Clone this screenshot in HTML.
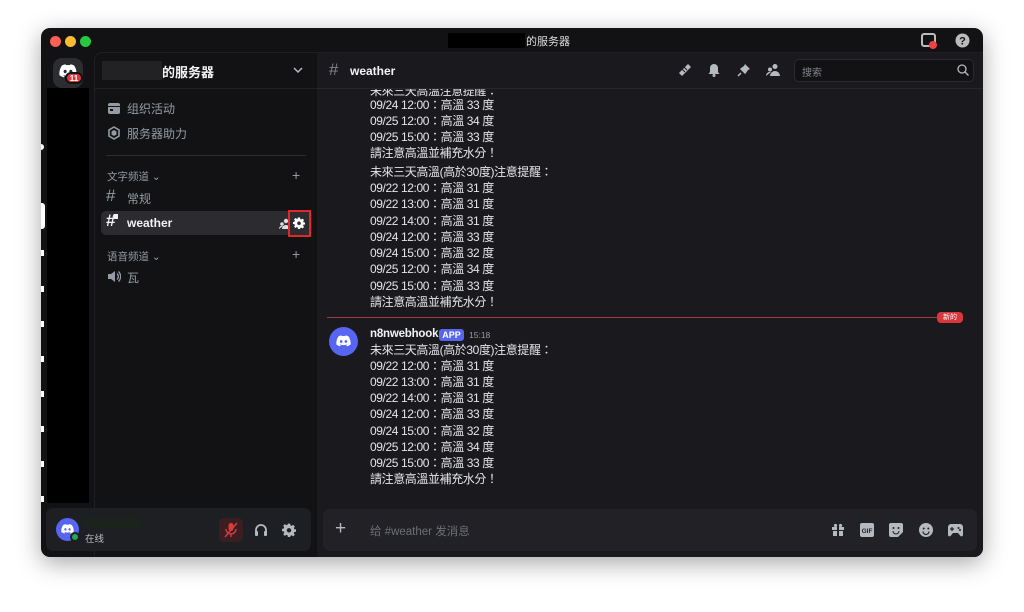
<!DOCTYPE html>
<html><head><meta charset="utf-8"><style>
*{margin:0;padding:0;box-sizing:border-box}
body{width:1024px;height:612px;background:#fff;position:relative;overflow:hidden;font-family:"Liberation Sans","Noto Sans CJK SC",sans-serif;color:#dbdee1}
.win{position:absolute;left:41px;top:28px;width:942px;height:529px;background:#121214;border-radius:9px;box-shadow:0 6px 24px rgba(0,0,0,.35);overflow:hidden}
.abs{position:absolute}
.dot{position:absolute;top:8px;width:11px;height:11px;border-radius:50%}
.msg{position:absolute;left:329px;font-size:12px;line-height:16px;color:#e4e5e8;white-space:nowrap;letter-spacing:-0.4px;font-family:"Liberation Sans","Noto Sans CJK TC",sans-serif}
.ic{position:absolute;color:#b5bac1}
</style></head><body>
<div class="win">
  <div class="dot" style="left:9px;background:#fe5f57"></div>
  <div class="dot" style="left:24px;background:#febc2e"></div>
  <div class="dot" style="left:39px;background:#28c840"></div>
  <div class="abs" style="left:407px;top:5px;width:77px;height:15px;background:#000"></div>
  <div class="abs" style="left:485px;top:5px;font-size:11px;color:#ddd">的服务器</div>
  <svg class="abs" style="left:880px;top:5px" width="16" height="16"><rect x="1" y="1" width="13" height="12" rx="2" fill="none" stroke="#bbb" stroke-width="2"/><circle cx="12" cy="12" r="4" fill="#f23f43"/></svg>
  <svg class="abs" style="left:914px;top:5px" width="15" height="15"><circle cx="7.5" cy="7.5" r="7" fill="#bbb"/><text x="7.5" y="11.5" font-size="11" font-weight="bold" text-anchor="middle" fill="#121214" font-family="Liberation Sans">?</text></svg>

  <!-- server rail -->
  <div class="abs" style="left:12px;top:30px;width:30px;height:30px;border-radius:9px;background:#2b2d31"></div>
  <svg class="abs" style="left:18px;top:36px" width="18" height="14" viewBox="0 0 24 18"><path d="M20 1.5A19 19 0 0 0 15.3 0l-.6 1.2a17 17 0 0 0-5.4 0L8.7 0A19 19 0 0 0 4 1.5C1 6 .2 10.3.6 14.6A19 19 0 0 0 6.4 17.5l1.2-1.9a12 12 0 0 1-1.9-.9l.5-.4a13.6 13.6 0 0 0 11.6 0l.5.4a12 12 0 0 1-1.9.9l1.2 1.9a19 19 0 0 0 5.8-2.9C23.8 9.6 22.6 5.3 20 1.5zM8.2 12c-1.1 0-2.1-1-2.1-2.3S7 7.4 8.2 7.4s2.1 1 2.1 2.3-1 2.3-2.1 2.3zm7.6 0c-1.1 0-2.1-1-2.1-2.3s.9-2.3 2.1-2.3 2.1 1 2.1 2.3-.9 2.3-2.1 2.3z" fill="#fff"/></svg>
  <div class="abs" style="left:24px;top:44px;width:18px;height:12px;border-radius:6px;background:#da373c;border:2px solid #121214;font-size:8px;font-weight:bold;color:#fff;text-align:center;line-height:9px">11</div>
  <div class="abs" style="left:6px;top:60px;width:42px;height:415px;background:#000"></div>
  <div class="abs" style="left:0;top:175px;width:4px;height:26px;background:#fff;border-radius:0 3px 3px 0"></div>
  <div class="abs" style="left:0;top:116px;width:3px;height:6px;background:#fff;border-radius:0 3px 3px 0"></div>
  <div class="abs" style="left:0;top:222px;width:3px;height:6px;background:#fff"></div>
  <div class="abs" style="left:0;top:258px;width:3px;height:6px;background:#fff"></div>
  <div class="abs" style="left:0;top:293px;width:3px;height:6px;background:#fff"></div>
  <div class="abs" style="left:0;top:328px;width:3px;height:6px;background:#fff"></div>
  <div class="abs" style="left:0;top:363px;width:3px;height:6px;background:#fff"></div>
  <div class="abs" style="left:0;top:398px;width:3px;height:6px;background:#fff"></div>
  <div class="abs" style="left:0;top:433px;width:3px;height:6px;background:#fff"></div>
  <div class="abs" style="left:0;top:468px;width:3px;height:6px;background:#fff"></div>

  <!-- channel sidebar -->
  <div class="abs" style="left:53px;top:24px;width:223px;height:505px;background:#121214;border-left:1px solid #1f1f23;border-top:1px solid #1f1f23;border-top-left-radius:8px"></div>
  <div class="abs" style="left:54px;top:60px;width:222px;height:1px;background:#222226"></div>
  <div class="abs" style="left:61px;top:33px;width:60px;height:19px;background:#222225"></div>
  <div class="abs" style="left:121px;top:34px;font-size:13px;font-weight:bold;color:#f2f3f5">的服务器</div>
  <svg class="abs" style="left:252px;top:38px" width="10" height="8"><path d="M1 2l4 4 4-4" stroke="#b5bac1" stroke-width="1.5" fill="none"/></svg>
  <svg class="abs" style="left:66px;top:73px" width="14" height="14"><rect x="1" y="2" width="12" height="11" rx="2" fill="#949ba4"/><rect x="1" y="5" width="12" height="1" fill="#121214"/><rect x="3" y="8" width="3" height="2" fill="#121214"/></svg>
  <div class="abs" style="left:86px;top:72px;font-size:12px;color:#949ba4">组织活动</div>
  <svg class="abs" style="left:67px;top:98px" width="12" height="14"><path d="M6 1l5 3v6l-5 3-5-3V4z" fill="none" stroke="#949ba4" stroke-width="1.6"/><path d="M6 4l2.5 1.5v3L6 10 3.5 8.5v-3z" fill="#949ba4"/></svg>
  <div class="abs" style="left:86px;top:97px;font-size:12px;color:#949ba4">服务器助力</div>
  <div class="abs" style="left:65px;top:127px;width:200px;height:1px;background:#2b2d31"></div>
  <div class="abs" style="left:66px;top:141px;font-size:10.5px;color:#949ba4">文字频道 ⌄</div>
  <div class="abs" style="left:251px;top:139px;font-size:14px;color:#949ba4">+</div>
  <div class="abs" style="left:65px;top:158px;font-size:17px;color:#949ba4">#</div>
  <div class="abs" style="left:86px;top:162px;font-size:12px;color:#949ba4">常规</div>
  <div class="abs" style="left:60px;top:183px;width:211px;height:24px;background:#2b2b30;border-radius:5px"></div>
  <div class="abs" style="left:65px;top:183px;font-size:17px;color:#f2f3f5;font-weight:bold">#</div>
  <div class="abs" style="left:73px;top:186px;width:4px;height:5px;background:#f2f3f5"></div>
  <div class="abs" style="left:86px;top:188px;font-size:12px;color:#f2f3f5;font-weight:bold">weather</div>
  <svg class="abs" style="left:238px;top:190px" width="11" height="11"><circle cx="7" cy="3" r="2.2" fill="#dbdee1"/><path d="M3 11a4 4 0 0 1 8 0z" fill="#dbdee1"/><circle cx="3" cy="6" r="1.8" fill="#dbdee1"/><path d="M0 11a3 3 0 0 1 4-3z" fill="#dbdee1"/></svg>
  <div class="abs" style="left:247px;top:182px;width:23px;height:27px;border:2px solid #e0282a"></div>
  <svg class="abs" style="left:252px;top:189px" width="12" height="12" viewBox="0 0 24 24"><path d="M10 1h4l.6 3 2 1 2.6-1.7 2.8 2.8L20.3 8.7l1 2L24 11v4l-3 .5-.8 2 1.8 2.6-2.8 2.8-2.6-1.8-2 .8L14 24h-4l-.5-3-2-.8-2.6 1.8-2.8-2.8L4 16.5l-.8-2L0 14v-4l3-.6.8-2L2 4.8 4.8 2l2.6 1.8 2-.8z" fill="#fff"/><circle cx="12" cy="12.5" r="3.6" fill="#2b2b30"/></svg>
  <div class="abs" style="left:66px;top:221px;font-size:10.5px;color:#949ba4">语音频道 ⌄</div>
  <div class="abs" style="left:251px;top:218px;font-size:14px;color:#949ba4">+</div>
  <svg class="abs" style="left:66px;top:242px" width="14" height="13"><path d="M1 4h3l4-3v11l-4-3H1z" fill="#949ba4"/><path d="M10 3.5a4 4 0 0 1 0 6M11.5 1.5a7 7 0 0 1 0 10" stroke="#949ba4" stroke-width="1.3" fill="none"/></svg>
  <div class="abs" style="left:86px;top:241px;font-size:12px;color:#949ba4">瓦</div>

  <!-- user panel -->
  <div class="abs" style="left:5px;top:480px;width:265px;height:43px;background:#1e1f22;border-radius:7px"></div>
  <div class="abs" style="left:15px;top:490px;width:23px;height:23px;border-radius:50%;background:#5865f2"></div>
  <svg class="abs" style="left:20px;top:496px" width="13" height="10" viewBox="0 0 24 18"><path d="M20 1.5A19 19 0 0 0 15.3 0l-.6 1.2a17 17 0 0 0-5.4 0L8.7 0A19 19 0 0 0 4 1.5C1 6 .2 10.3.6 14.6A19 19 0 0 0 6.4 17.5l1.2-1.9a12 12 0 0 1-1.9-.9l.5-.4a13.6 13.6 0 0 0 11.6 0l.5.4a12 12 0 0 1-1.9.9l1.2 1.9a19 19 0 0 0 5.8-2.9C23.8 9.6 22.6 5.3 20 1.5zM8.2 12c-1.1 0-2.1-1-2.1-2.3S7 7.4 8.2 7.4s2.1 1 2.1 2.3-1 2.3-2.1 2.3zm7.6 0c-1.1 0-2.1-1-2.1-2.3s.9-2.3 2.1-2.3 2.1 1 2.1 2.3-.9 2.3-2.1 2.3z" fill="#fff"/></svg>
  <div class="abs" style="left:29px;top:504px;width:10px;height:10px;border-radius:50%;background:#23a55a;border:2px solid #1e1f22"></div>
  <div class="abs" style="left:44px;top:490px;width:57px;height:10px;background:#1c221c"></div>
  <div class="abs" style="left:44px;top:503px;font-size:9.5px;color:#b5bac1">在线</div>
  <div class="abs" style="left:178px;top:490px;width:24px;height:24px;border-radius:5px;background:#3a1e22"></div>
  <svg class="abs" style="left:183px;top:494px" width="14" height="16"><rect x="4.5" y="1" width="5" height="8" rx="2.5" fill="#d83c3e"/><path d="M2 7a5 5 0 0 0 10 0M7 12v3" stroke="#d83c3e" stroke-width="1.4" fill="none"/><path d="M1 15L13 1" stroke="#d83c3e" stroke-width="1.5"/></svg>
  <svg class="abs" style="left:213px;top:495px" width="14" height="14"><path d="M2 10V7a5 5 0 0 1 10 0v3" stroke="#b5bac1" stroke-width="1.8" fill="none"/><rect x="1" y="8" width="3" height="5" rx="1" fill="#b5bac1"/><rect x="10" y="8" width="3" height="5" rx="1" fill="#b5bac1"/></svg>
  <svg class="abs" style="left:241px;top:495px" width="14" height="14" viewBox="0 0 24 24"><path d="M10 1h4l.6 3 2 1 2.6-1.7 2.8 2.8L20.3 8.7l1 2L24 11v4l-3 .5-.8 2 1.8 2.6-2.8 2.8-2.6-1.8-2 .8L14 24h-4l-.5-3-2-.8-2.6 1.8-2.8-2.8L4 16.5l-.8-2L0 14v-4l3-.6.8-2L2 4.8 4.8 2l2.6 1.8 2-.8z" fill="#b5bac1"/><circle cx="12" cy="12.5" r="3.8" fill="#1e1f22"/></svg>

  <!-- main -->
  <div class="abs" style="left:276px;top:24px;width:666px;height:505px;background:#1a1a1e;border-top:1px solid #1f1f23"></div>
  <div class="abs" style="left:276px;top:60px;width:666px;height:1px;background:#26262b"></div>
  <div class="abs" style="left:288px;top:32px;font-size:17px;color:#80848e">#</div>
  <div class="abs" style="left:309px;top:36px;font-size:12px;font-weight:bold;color:#f2f3f5">weather</div>
  <svg class="abs" style="left:637px;top:35px" width="14" height="14"><path d="M1 10L10 1l3 3-9 9z" fill="#b5bac1"/><path d="M4 6l3 3M6 4l3 3" stroke="#1a1a1e" stroke-width="1"/></svg>
  <svg class="abs" style="left:667px;top:35px" width="12" height="14"><path d="M6 1a4 4 0 0 1 4 4v4l1.5 2h-11L2 9V5a4 4 0 0 1 4-4z" fill="#b5bac1"/><circle cx="6" cy="12.5" r="1.5" fill="#b5bac1"/></svg>
  <svg class="abs" style="left:696px;top:35px" width="14" height="14"><path d="M8 1l5 5-2 1-2 3-1 1-5-5 1-1 3-2z" fill="#b5bac1"/><path d="M4 10l-3 3" stroke="#b5bac1" stroke-width="1.5"/></svg>
  <svg class="abs" style="left:725px;top:35px" width="14" height="13"><circle cx="9" cy="3.5" r="2.5" fill="#b5bac1"/><path d="M4 13a5 5 0 0 1 10 0z" fill="#b5bac1"/><circle cx="4" cy="6.5" r="2" fill="#b5bac1"/><path d="M0 13a4 4 0 0 1 5-4z" fill="#b5bac1"/></svg>
  <div class="abs" style="left:753px;top:31px;width:180px;height:23px;background:#121214;border:1px solid #2a2a2f;border-radius:5px"></div>
  <div class="abs" style="left:761px;top:36px;font-size:10px;color:#80848e">搜索</div>
  <svg class="abs" style="left:916px;top:36px" width="12" height="12"><circle cx="5" cy="5" r="4" stroke="#b5bac1" stroke-width="1.3" fill="none"/><path d="M8 8l3.5 3.5" stroke="#b5bac1" stroke-width="1.3"/></svg>

  <div class="abs" style="left:276px;top:61px;width:666px;height:420px;overflow:hidden">
    <div class="msg" style="left:53px;top:-6px">未來三天高溫注意提醒：</div>
    <div class="msg" style="left:53px;top:8px">09/24 12:00：高溫 33 度</div>
    <div class="msg" style="left:53px;top:24px">09/25 12:00：高溫 34 度</div>
    <div class="msg" style="left:53px;top:40px">09/25 15:00：高溫 33 度</div>
    <div class="msg" style="left:53px;top:56px">請注意高溫並補充水分！</div>
    <div class="msg" style="left:53px;top:75px">未來三天高溫(高於30度)注意提醒：</div>
    <div class="msg" style="left:53px;top:91px">09/22 12:00：高溫 31 度</div>
    <div class="msg" style="left:53px;top:107px">09/22 13:00：高溫 31 度</div>
    <div class="msg" style="left:53px;top:124px">09/22 14:00：高溫 31 度</div>
    <div class="msg" style="left:53px;top:140px">09/24 12:00：高溫 33 度</div>
    <div class="msg" style="left:53px;top:156px">09/24 15:00：高溫 32 度</div>
    <div class="msg" style="left:53px;top:172px">09/25 12:00：高溫 34 度</div>
    <div class="msg" style="left:53px;top:189px">09/25 15:00：高溫 33 度</div>
    <div class="msg" style="left:53px;top:205px">請注意高溫並補充水分！</div>
    <div class="abs" style="left:10px;top:228px;width:622px;height:1px;background:#a13a3d"></div>
    <div class="abs" style="left:620px;top:223px;width:26px;height:11px;background:#da373c;border-radius:4px;font-size:7px;color:#fff;text-align:center;line-height:11px">新的</div>
    <div class="abs" style="left:12px;top:238px;width:29px;height:29px;border-radius:50%;background:#5865f2"></div>
    <svg class="abs" style="left:19px;top:246px" width="15" height="12" viewBox="0 0 24 18"><path d="M20 1.5A19 19 0 0 0 15.3 0l-.6 1.2a17 17 0 0 0-5.4 0L8.7 0A19 19 0 0 0 4 1.5C1 6 .2 10.3.6 14.6A19 19 0 0 0 6.4 17.5l1.2-1.9a12 12 0 0 1-1.9-.9l.5-.4a13.6 13.6 0 0 0 11.6 0l.5.4a12 12 0 0 1-1.9.9l1.2 1.9a19 19 0 0 0 5.8-2.9C23.8 9.6 22.6 5.3 20 1.5zM8.2 12c-1.1 0-2.1-1-2.1-2.3S7 7.4 8.2 7.4s2.1 1 2.1 2.3-1 2.3-2.1 2.3zm7.6 0c-1.1 0-2.1-1-2.1-2.3s.9-2.3 2.1-2.3 2.1 1 2.1 2.3-.9 2.3-2.1 2.3z" fill="#fff"/></svg>
    <div class="abs" style="left:53px;top:239px;font-size:11.5px;font-weight:bold;color:#f2f3f5;letter-spacing:-0.2px">n8nwebhook</div>
    <div class="abs" style="left:122px;top:240px;width:25px;height:12px;background:#5865f2;border-radius:3px;font-size:9px;font-weight:bold;color:#fff;text-align:center;line-height:12px">APP</div>
    <div class="abs" style="left:152px;top:241px;font-size:8.5px;color:#949ba4">15:18</div>
    <div class="msg" style="left:53px;top:253px">未來三天高溫(高於30度)注意提醒：</div>
    <div class="msg" style="left:53px;top:269px">09/22 12:00：高溫 31 度</div>
    <div class="msg" style="left:53px;top:285px">09/22 13:00：高溫 31 度</div>
    <div class="msg" style="left:53px;top:301px">09/22 14:00：高溫 31 度</div>
    <div class="msg" style="left:53px;top:317px">09/24 12:00：高溫 33 度</div>
    <div class="msg" style="left:53px;top:334px">09/24 15:00：高溫 32 度</div>
    <div class="msg" style="left:53px;top:350px">09/25 12:00：高溫 34 度</div>
    <div class="msg" style="left:53px;top:366px">09/25 15:00：高溫 33 度</div>
    <div class="msg" style="left:53px;top:382px">請注意高溫並補充水分！</div>
  </div>

  <!-- input -->
  <div class="abs" style="left:282px;top:481px;width:654px;height:42px;background:#222226;border-radius:7px"></div>
  <div class="abs" style="left:294px;top:490px;font-size:19px;color:#b5bac1;font-weight:300">+</div>
  <div class="abs" style="left:329px;top:495px;font-size:11.5px;color:#6d6f78">给 #weather 发消息</div>
  <svg class="abs" style="left:790px;top:495px" width="14" height="14"><rect x="1" y="4" width="12" height="3" fill="#b5bac1"/><rect x="2" y="8" width="10" height="5" fill="#b5bac1"/><rect x="6" y="4" width="2" height="9" fill="#222226"/><circle cx="4.5" cy="2.5" r="1.6" fill="#b5bac1"/><circle cx="9.5" cy="2.5" r="1.6" fill="#b5bac1"/></svg>
  <svg class="abs" style="left:819px;top:495px" width="14" height="14"><rect x="0" y="0" width="14" height="14" rx="2" fill="#b5bac1"/><text x="7" y="10" font-size="6.5" font-weight="bold" text-anchor="middle" fill="#222226" font-family="Liberation Sans">GIF</text></svg>
  <svg class="abs" style="left:848px;top:495px" width="14" height="14"><path d="M2 0h10a2 2 0 0 1 2 2v7l-5 5H2a2 2 0 0 1-2-2V2a2 2 0 0 1 2-2z" fill="#b5bac1"/><circle cx="4.5" cy="5" r="1" fill="#222226"/><circle cx="9.5" cy="5" r="1" fill="#222226"/><path d="M4 8a3 3 0 0 0 6 0" stroke="#222226" fill="none"/></svg>
  <svg class="abs" style="left:878px;top:495px" width="14" height="14"><circle cx="7" cy="7" r="7" fill="#b5bac1"/><circle cx="4.7" cy="5.5" r="1" fill="#222226"/><circle cx="9.3" cy="5.5" r="1" fill="#222226"/><path d="M4 8.5a3 3 0 0 0 6 0" stroke="#222226" fill="none" stroke-width="1.2"/></svg>
  <svg class="abs" style="left:907px;top:495px" width="15" height="14"><path d="M3 1h9a3 3 0 0 1 3 3v8a1.5 1.5 0 0 1-2.5 1L10 10H5l-2.5 3A1.5 1.5 0 0 1 0 12V4a3 3 0 0 1 3-3z" fill="#b5bac1"/><path d="M4 4v4M2 6h4" stroke="#222226" stroke-width="1.2"/><circle cx="10.5" cy="5" r="1" fill="#222226"/><circle cx="12" cy="7" r="1" fill="#222226"/></svg>
</div>
</body></html>
